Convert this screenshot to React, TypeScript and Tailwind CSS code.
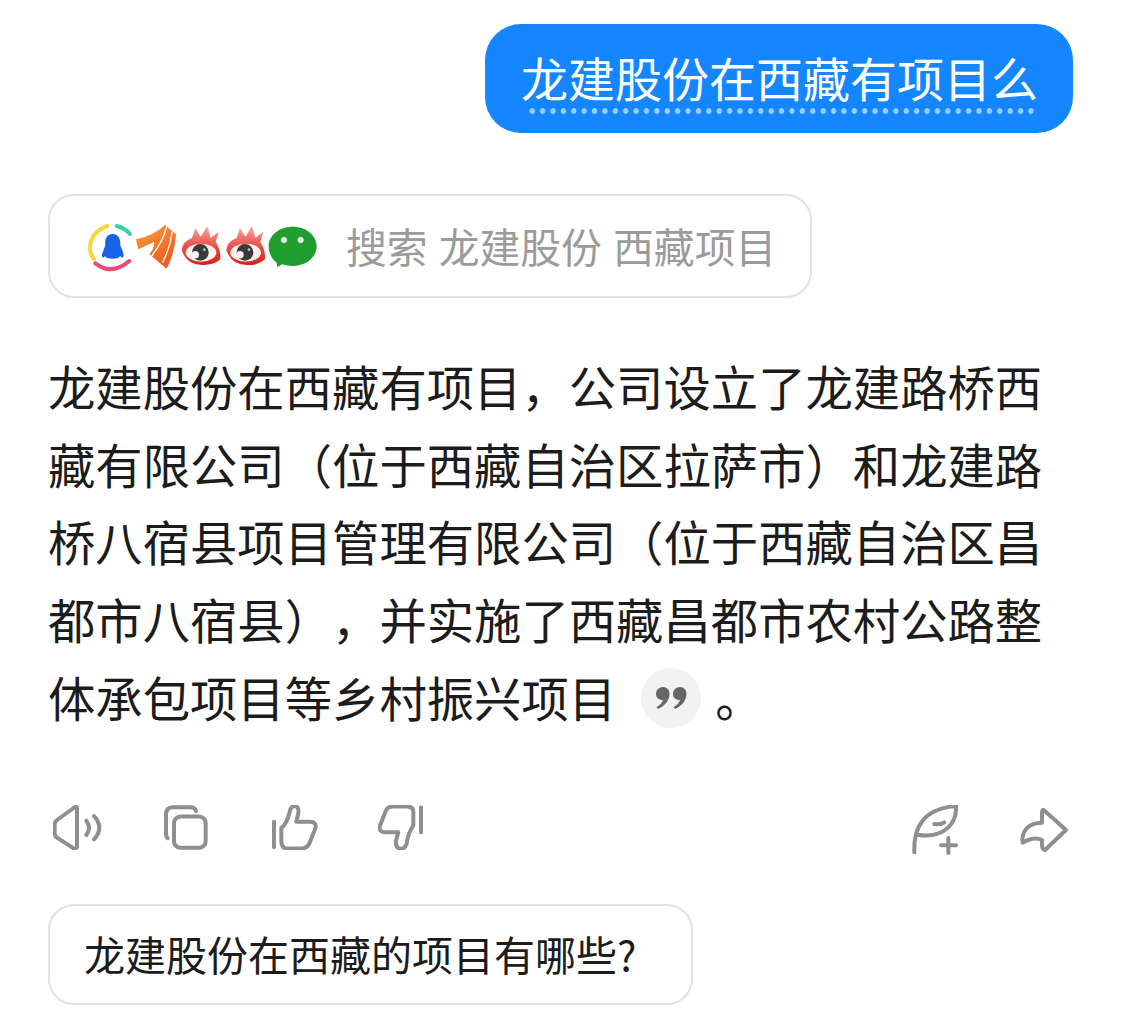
const cjk = "font-['Noto_Sans_CJK_SC','Noto_Sans',sans-serif]";

function WeiboEye({ dx }: { dx: number }) {
  return (
    <g transform={`translate(${dx} 0)`}>
      <path d="M335 132 Q338 106 366 96 L376 66 L392 92 L412 60 L422 95 L446 78 L437 108 Q453 132 451 160 Q430 179 395 177 Q350 176 335 132Z" fill="url(#weibo-red)" />
      <ellipse cx="393" cy="140" rx="46" ry="27" fill="#fdf1ee" />
      <circle cx="391" cy="139" r="25" fill="#3a3a3a" />
      <circle cx="376" cy="146" r="11" fill="#f2f2f2" />
      <circle cx="403" cy="131" r="4" fill="#bdbdbd" />
    </g>
  );
}

function SourceLogos() {
  return (
    <svg viewBox="0 0 810 240" className="h-[80px] w-[270px] shrink-0">
      <defs>
        <linearGradient id="weibo-red" x1="0" y1="0" x2="0" y2="1">
          <stop offset="0" stopColor="#f7a9a3" />
          <stop offset="0.55" stopColor="#ea4a42" />
          <stop offset="1" stopColor="#d81f1c" />
        </linearGradient>
        <linearGradient id="wing" x1="0" y1="0" x2="0.6" y2="1">
          <stop offset="0" stopColor="#f9a13a" />
          <stop offset="1" stopColor="#ef5a1c" />
        </linearGradient>
      </defs>
      {/* qq */}
      <path d="M112 60 Q62 78 60 125 Q60 145 72 160" fill="none" stroke="#f6d73c" strokeWidth="12" strokeLinecap="round" />
      <path d="M140 60 Q165 66 180 84" fill="none" stroke="#3ecfa6" strokeWidth="12" strokeLinecap="round" />
      <path d="M76 172 Q125 210 178 165" fill="none" stroke="#ee4a78" strokeWidth="12" strokeLinecap="round" />
      <path d="M128 84 C146 84 152 100 151 118 L158 136 Q164 150 157 156 L150 150 Q147 158 128 158 Q108 158 105 150 L99 156 Q92 148 100 134 L106 118 C104 100 110 84 128 84Z" fill="#1764e8" />
      {/* feather */}
      <path d="M198 100 Q250 90 285 57 L318 85 Q315 140 290 188 L238 145 Q256 122 252 108 L205 130 Z" fill="url(#wing)" />
      <path d="M290 62 Q280 105 245 150" fill="none" stroke="#fff" strokeWidth="4" />
      <path d="M307 76 Q300 125 278 170" fill="none" stroke="#fff" strokeWidth="4" />
      {/* weibo */}
      <WeiboEye dx={0} />
      <WeiboEye dx={134} />
      {/* wechat */}
      <path d="M668 62 C708 62 740 88 740 121 C740 154 708 180 668 180 Q650 180 636 175 L622 184 L620 170 C606 160 596 142 596 121 C596 88 628 62 668 62Z" fill="#1f9d2e" />
      <circle cx="642" cy="102" r="9" fill="#e8f6e6" />
      <circle cx="692" cy="102" r="9" fill="#e8f6e6" />
    </svg>
  );
}

function Icon({ box, w, h, children }: { box: string; w: number; h: number; children: React.ReactNode }) {
  return (
    <svg
      viewBox={box}
      width={w}
      height={h}
      fill="none"
      stroke="#8f8f8f"
      strokeWidth="12"
      strokeLinecap="round"
      strokeLinejoin="round"
      className="shrink-0"
    >
      {children}
    </svg>
  );
}

export default function App() {
  return (
    <div className={`flex min-h-[1028px] w-full flex-col bg-white px-[48px] pt-[24px] [text-spacing-trim:space-all] ${cjk}`}>
      <div className="flex justify-end">
        <div className="w-[588px] rounded-[36px] bg-[#1486ff] pb-[19px] pl-[36px] pr-[36px] pt-[22px] text-white">
          <div className="whitespace-nowrap text-[47px] leading-[62px]">龙建股份在西藏有项目么</div>
          <div className="ml-[6px] h-[6px] bg-[radial-gradient(circle,#9accff_2.6px,transparent_3px)] bg-[length:10.4px_6px]" />
        </div>
      </div>

      <div className="mt-[61px] flex h-[104px] w-[764px] items-center gap-[6px] rounded-[26px] border-2 border-[#e2e2e2] pl-[20px]">
        <SourceLogos />
        <span className="whitespace-pre text-[40.8px] text-[#9b9b9b] [word-spacing:2px]">搜索 龙建股份 西藏项目</span>
      </div>

      <div className="mt-[49px] text-[47.35px] leading-[77.7px] text-[#1c1c1c]">
        <span>龙建股份在西藏有项目，公司设立了龙建路桥西藏有限公司（位于西藏自治区拉萨市）和龙建路桥八宿县项目管理有限公司（位于西藏自治区昌都市八宿县），并实施了西藏昌都市农村公路整体承包项目等乡村振兴项目</span>
        <span className="ml-[25px] mr-[14px] inline-flex h-[60px] w-[60px] items-center justify-center rounded-full bg-[#f2f2f2] align-[7px]">
          <svg viewBox="0 0 32 24" width="32" height="24" fill="#666666">
            <path d="M8 1 C12 1 14.500 4 14.500 8 C14.500 14 10 20 3 23 L1.500 21 C5 19 7.500 16.500 8 14 C3.500 14 1 11.500 1 8 C1 4 4 1 8 1Z" />
            <path d="M25 1 C29 1 31.500 4 31.500 8 C31.500 14 27 20 20 23 L18.500 21 C22 19 24.500 16.500 25 14 C20.500 14 18 11.500 18 8 C18 4 21 1 25 1Z" />
          </svg>
        </span>
        <span>。</span>
      </div>

      <div className="mt-[69px] flex items-start justify-between pl-[5px] pr-[5px]">
        <div className="flex items-center">
          <Icon box="40 45 150 135" w={50} h={45}>
            <path d="M106 51 L52 90 Q45 95 45 102 V130 Q45 138 52 143 L102 175 Q112 178 112 168 V58 Q112 46 106 51Z" />
            <path d="M140 92 Q156 113 140 135" />
            <path d="M163 78 Q195 113 163 148" />
          </Icon>
          <div className="ml-[61px]">
            <Icon box="372 44 132 134" w={44} h={45}>
              <rect x="402" y="78" width="95" height="94" rx="20" />
              <path d="M383 143 Q378 140 378 130 V72 Q378 50 400 50 H450 Q466 50 468 62" />
            </Icon>
          </div>
          <div className="ml-[64px]">
            <Icon box="697 42 138 134" w={46} h={45}>
              <path d="M703 92 V168" />
              <path d="M725 110 Q735 105 745 80 L752 55 Q757 43 768 45 Q780 50 775 70 L770 92 H810 Q832 92 827 112 L810 155 Q803 172 785 172 H745 Q725 172 725 150 Z" />
            </Icon>
          </div>
          <div className="ml-[60px]">
            <Icon box="1014 44 138 134" w={46} h={45}>
              <path d="M1143 50 V125" />
              <path d="M1120 105 V65 Q1120 48 1100 48 H1060 Q1042 48 1037 62 L1020 105 Q1015 125 1035 125 H1075 L1068 150 Q1065 172 1082 175 Q1095 175 1100 160 Q1103 130 1120 105Z" />
            </Icon>
          </div>
        </div>
        <div className="flex items-center">
          <Icon box="38 36 138 150" w={46} h={50}>
            <path d="M45 178 Q42 90 100 58 Q135 40 170 40 Q172 80 145 105 Q110 135 55 125" />
            <path d="M105 93 Q125 95 135 88" />
            <path d="M125 157 H170 M147 135 V180" />
          </Icon>
          <div className="ml-[62px]">
            <Icon box="357 46 144 132" w={48} h={44}>
              <path d="M428 52 L495 112 L432 172 Q425 172 423 160 V142 Q400 130 365 150 Q360 120 385 100 Q400 90 423 90 V60 Q425 48 428 52Z" />
            </Icon>
          </div>
        </div>
      </div>

      <div className="mt-[49px] flex h-[101px] w-[645px] items-center rounded-[26px] border-2 border-[#e2e2e2] pl-[34px] text-[41px] text-[#1c1c1c]">
        龙建股份在西藏的项目有哪些?
      </div>
    </div>
  );
}
